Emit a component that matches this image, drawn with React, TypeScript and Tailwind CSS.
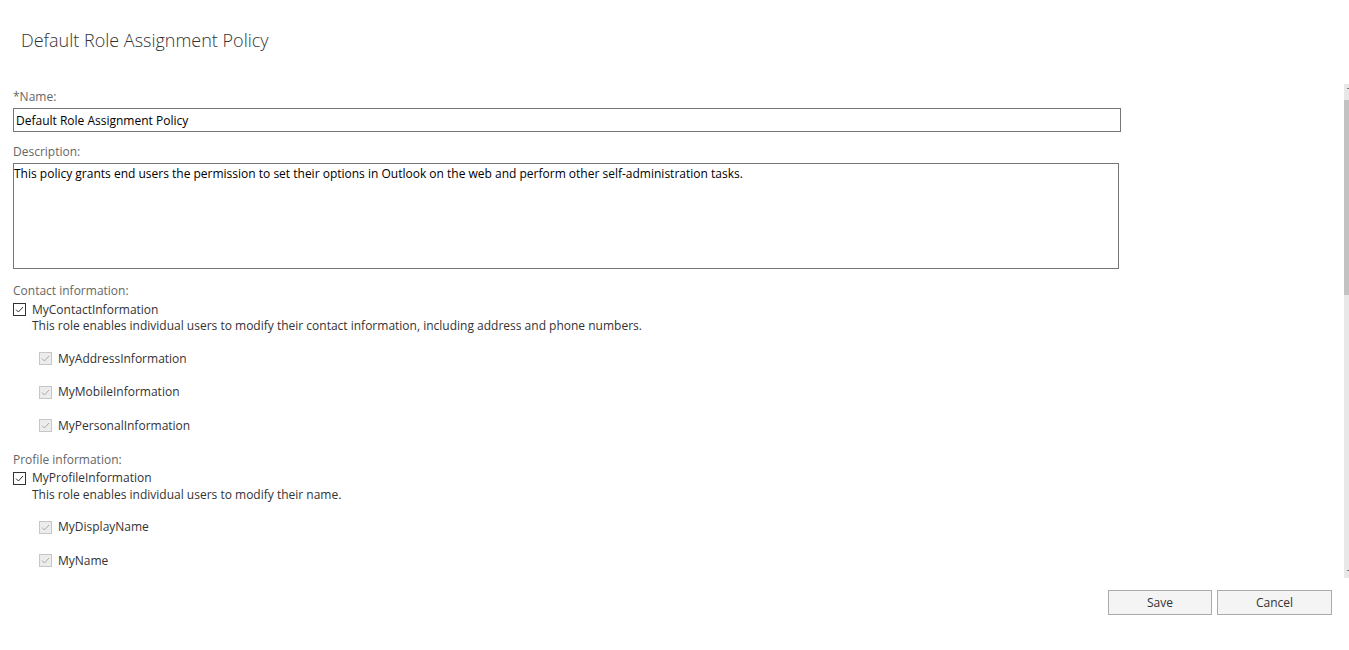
import React from 'react';

// Checkbox drawn by hand so the thin check matches the screenshot
function Box({ disabled = false }: { disabled?: boolean }) {
  return (
    <span
      className={
        disabled
          ? 'inline-flex w-[13px] h-[13px] shrink-0 items-center justify-center border border-[#c6c6c6] bg-[#ececec]'
          : 'inline-flex w-[13px] h-[13px] shrink-0 items-center justify-center border border-[#333333] bg-white'
      }
    >
      <svg width="11" height="11" viewBox="0 0 11 11" fill="none">
        <path
          d="M2 5.6 L4.4 8 L9 3"
          stroke={disabled ? '#a8a8a8' : '#333333'}
          strokeWidth="1"
        />
      </svg>
    </span>
  );
}

type Role = {
  name: string;
  desc: string;
  children: string[];
};

const groups: { title: string; roles: Role[] }[] = [
  {
    title: 'Contact information:',
    roles: [
      {
        name: 'MyContactInformation',
        desc: 'This role enables individual users to modify their contact information, including address and phone numbers.',
        children: ['MyAddressInformation', 'MyMobileInformation', 'MyPersonalInformation'],
      },
    ],
  },
  {
    title: 'Profile information:',
    roles: [
      {
        name: 'MyProfileInformation',
        desc: 'This role enables individual users to modify their name.',
        children: ['MyDisplayName', 'MyName'],
      },
    ],
  },
];

export default function App() {
  return (
    <div
      className="w-[1349px] h-[650px] bg-white flex flex-col text-[12px] text-[#333333]"
      style={{ fontFamily: '"Segoe UI", "Open Sans", sans-serif' }}
    >
      {/* Header */}
      <div className="h-[84px] shrink-0 pl-[21px] pt-[26px]">
        <h1 className="text-[18px] font-light text-[#333333] leading-[28px]">Default Role Assignment Policy</h1>
      </div>

      {/* Scrolling body */}
      <div className="h-[494px] flex shrink-0">
        <div className="flex-1 overflow-hidden pl-[13px] pr-[222px] pt-[4px]">
          <div className="text-[#666666] leading-[18px]">*Name:</div>
          <input
            className="mt-[2px] block w-[1108px] h-[24px] border border-[#767676] px-[2px] text-[12px] text-[#000000] outline-none"
            defaultValue="Default Role Assignment Policy"
          />
          <div className="mt-[11px] text-[#666666] leading-[18px]">Description:</div>
          <textarea
            className="mt-[2px] block w-[1106px] h-[106px] border border-[#767676] px-0 py-[1px] text-[12px] leading-[18px] text-[#000000] resize-none outline-none"
            defaultValue="This policy grants end users the permission to set their options in Outlook on the web and perform other self-administration tasks."
          />

          {groups.map((g, i) => (
            <div key={g.title} className={i === 0 ? 'mt-[13px]' : 'mt-[8px]'}>
              <div className="text-[#666666] leading-[18px]">{g.title}</div>
              {g.roles.map((r) => (
                <div key={r.name}>
                  <div className="flex items-center gap-[6px] h-[17px] mt-[1px]">
                    <Box />
                    <span>{r.name}</span>
                  </div>
                  <div className="pl-[19px] leading-[16px] mb-[8px]">{r.desc}</div>
                  {r.children.map((c) => (
                    <div key={c} className="flex items-center gap-[6px] h-[33.5px] pl-[26px]">
                      <Box disabled />
                      <span>{c}</span>
                    </div>
                  ))}
                </div>
              ))}
            </div>
          ))}
        </div>

        {/* Scrollbar */}
        <div className="w-[5px] bg-[#e8e8e8] flex flex-col items-end">
          <div className="h-[16px] w-full flex justify-end pt-[4px]">
            <span className="w-[2px] h-[1px] bg-[#777777]" />
          </div>
          <div className="h-[195px] w-full bg-[#c2c2c2]" />
          <div className="flex-1" />
          <div className="h-[8px] w-full flex justify-end">
            <span className="w-[2px] h-[1px] bg-[#777777]" />
          </div>
        </div>
      </div>

      {/* Footer buttons */}
      <div className="flex justify-end gap-[5px] pr-[17px] pt-[12px]">
        <button className="w-[104px] h-[25px] bg-[#f4f4f4] border border-[#ababab] text-[#333333] text-[12px]">
          Save
        </button>
        <button className="w-[115px] h-[25px] bg-[#f4f4f4] border border-[#ababab] text-[#333333] text-[12px]">
          Cancel
        </button>
      </div>
    </div>
  );
}
